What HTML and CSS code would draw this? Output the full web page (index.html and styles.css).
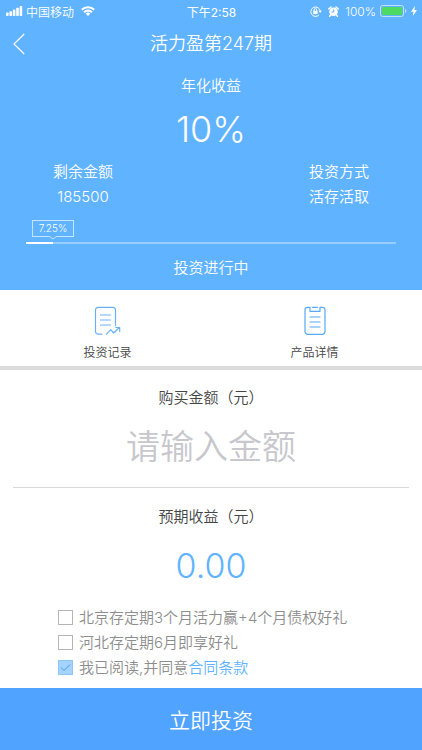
FILE: index.html
```html
<!DOCTYPE html>
<html lang="zh-CN">
<head>
<meta charset="utf-8">
<meta name="viewport" content="width=device-width, initial-scale=1">
<title>活力盈第247期</title>
<link rel="stylesheet" href="styles.css">
</head>
<body>
<main class="app">
  <header class="hero">
    <div class="status">
      <div class="status-side">
        <svg class="signal" width="17" height="10" viewBox="0 0 17 10" fill="#fff" aria-hidden="true"><rect x="0" y="6.5" width="2.6" height="3.5" rx=".8"/><rect x="3.4" y="5.2" width="2.6" height="4.8" rx=".8"/><rect x="6.8" y="3.6" width="2.6" height="6.4" rx=".8"/><rect x="10.2" y="1.8" width="2.6" height="8.2" rx=".8"/><rect x="13.6" y="0" width="2.6" height="10" rx=".8"/></svg>
        <span>中国移动</span>
        <svg class="wifi" width="14" height="10" viewBox="0 0 14 10" fill="none" stroke="#fff" stroke-width="2.2" aria-hidden="true"><path d="M.8 3.800a8.800 8.800 0 0 1 12.400 0"/><path d="M3.100 6.300a5.500 5.500 0 0 1 7.800 0"/><path d="M7 10 4.700 7.800a3.200 3.200 0 0 1 4.600 0z" fill="#fff" stroke="none"/></svg>
      </div>
      <span class="time">下午2:58</span>
      <div class="status-side status-right">
        <svg width="12" height="11" viewBox="0 0 12 11" fill="none" stroke="#fff" aria-hidden="true"><path d="M9 8.9A4.7 4.7 0 1 1 10.2 5"/><path d="M8.3 4.8h3.6l-1.8 2.3z" fill="#fff" stroke="none"/><rect x="3.2" y="4.8" width="4.4" height="3.3" fill="#fff" stroke="none"/><path d="M4.1 5V3.9a1.3 1.3 0 0 1 2.6 0V5"/></svg>
        <svg class="alarm" width="11" height="11" viewBox="0 0 11 11" aria-hidden="true"><circle cx="5.5" cy="5.8" r="4.3" fill="#fff"/><path d="M.9 2.9 3 1M10.1 2.9 8 1M2.5 9.2l-.9 1.1M8.5 9.2l.9 1.1" stroke="#fff" stroke-width="1.5" stroke-linecap="round"/><path d="M5.7 3.4V6H3.5" fill="none" stroke="#60b3ff"/></svg>
        <span>100%</span>
        <svg class="battery" width="27" height="12" viewBox="0 0 27 12" aria-hidden="true"><rect x=".5" y=".5" width="23" height="11" rx="2.2" fill="none" stroke="#fff" stroke-opacity=".6"/><rect x="2" y="2" width="20" height="8" rx="1" fill="#4cd964"/><path d="M25 4c1.7.5 1.7 3.5 0 4z" fill="#fff" fill-opacity=".6"/></svg>
        <svg width="6" height="10" viewBox="0 0 6 10" fill="#fff" aria-hidden="true"><path d="M4 0 0 5.7h2.5L1.8 10 6 4.1H3.4z"/></svg>
      </div>
    </div>
    <nav class="nav">
      <button class="back" type="button" aria-label="返回"><svg width="12" height="22" viewBox="0 0 12 22" fill="none" stroke="#fff" stroke-width="1.2"><path d="M11.2 1 1 11l10.2 10"/></svg></button>
      <h1>活力盈第247期</h1>
    </nav>
    <p class="rate-label">年化收益</p>
    <p class="rate">10%</p>
    <div class="facts">
      <div><p>剩余金额</p><p>185500</p></div>
      <div><p>投资方式</p><p>活存活取</p></div>
    </div>
    <div class="progress">
      <span class="tag">7.25%<svg class="pointer" width="8" height="4" viewBox="0 0 8 4" aria-hidden="true"><path d="M0 0h8L4 3z" fill="#60b3ff"/><path d="M.5 .5 4 3 7.5 .5" fill="none" stroke="#c6e4ff"/></svg></span>
      <div class="track"><div class="fill" style="width:7.25%"></div></div>
    </div>
    <p class="state">投资进行中</p>
  </header>

  <nav class="tabs">
    <a href="#records">
      <svg width="28" height="30" viewBox="0 0 28 30" fill="none" stroke="#69b1f4" stroke-width="1.2" stroke-linecap="round" stroke-linejoin="round" aria-hidden="true"><path d="M8 28.2H4.2A2.7 2.7 0 0 1 1.5 25.5V4A2.7 2.7 0 0 1 4.2 1.3h14.6A2.7 2.7 0 0 1 21.5 4v15.500M6.500 9h10M6.500 14h10M6.500 19h10"/><path d="m12.500 28.200 4.200-4.500 3 3.300 5.500-5.500M21.700 21.500h4v4"/></svg>
      <span>投资记录</span>
    </a>
    <a href="#details">
      <svg width="22" height="30" viewBox="0 0 22 30" fill="none" stroke="#55a9f6" stroke-width="1.2" stroke-linecap="round" stroke-linejoin="round" aria-hidden="true"><path d="M6 1.300H3.500A2.500 2.500 0 0 0 1 3.800V25.500A2.800 2.800 0 0 0 3.800 28.300h14.400A2.800 2.800 0 0 0 21 25.500V3.800A2.500 2.500 0 0 0 18.500 1.300H16M6 1.300V5.300H16V1.300M8.500 1.300h5M6 11h10M6 16h10M6 21h10"/></svg>
      <span>产品详情</span>
    </a>
  </nav>

  <form class="form">
    <label class="caption" for="amount">购买金额（元）</label>
    <input class="amount" id="amount" type="text" inputmode="decimal" placeholder="请输入金额">
    <p class="caption">预期收益（元）</p>
    <output class="earning" for="amount">0.00</output>
    <div class="options">
      <label><input type="checkbox">北京存定期3个月活力赢+4个月债权好礼</label>
      <label><input type="checkbox">河北存定期6月即享好礼</label>
      <div class="agree"><label><input type="checkbox" checked>我已阅读,并同意</label><a href="#terms">合同条款</a></div>
    </div>
    <button class="submit" type="submit">立即投资</button>
  </form>
</main>
</body>
</html>
```
FILE: styles.css
```css
* { box-sizing: border-box; }
body, p, h1 { margin: 0; }
body {
  font-family: Inter, "Noto Sans CJK SC", sans-serif;
  font-size: 15px;
  font-weight: 350;
  color: #444;
  background: #fff;
}
button, input { font: inherit; color: inherit; }
button { border: 0; padding: 0; background: none; cursor: pointer; }
a { text-decoration: none; color: inherit; }
svg { display: block; flex: none; }

.app { display: flex; flex-direction: column; min-height: 100vh; }

.hero { background: #60b3ff; color: #fff; text-align: center; padding-bottom: 10px; }
.status {
  display: grid;
  grid-template-columns: 1fr auto 1fr;
  align-items: center;
  height: 22px;
  padding: 0 5px 0 6px;
  font-size: 12px;
}
.status-side { display: flex; align-items: center; gap: 3px; }
.status-right { justify-content: flex-end; gap: 4px; }
.wifi { margin-left: 4px; }
.alarm { margin: 0 2px; }
.time { font-weight: 400; }

.nav {
  display: grid;
  grid-template-columns: 40px 1fr 40px;
  align-items: center;
  height: 44px;
}
.nav h1 { font-size: 18px; font-weight: 350; line-height: 24px; }
.back { display: flex; align-items: center; height: 44px; padding-left: 13px; }

.rate-label { margin-top: 8px; line-height: 24px; }
.rate { margin-top: 9px; font-size: 36px; line-height: 44px; }
.facts { display: flex; justify-content: space-between; padding: 0 53px; margin-top: 8px; line-height: 25px; }

.progress { padding: 11px 26px 0; text-align: left; }
.tag {
  position: relative;
  display: block;
  width: 42px;
  margin-left: 6px;
  border: 1px solid #c6e4ff;
  font-size: 10px;
  line-height: 15px;
  text-align: center;
}
.pointer { position: absolute; left: 16px; top: 15px; }
.track { height: 2px; margin-top: 5px; background: #98cdff; }
.fill { height: 2px; background: #fff; }
.state { margin-top: 12px; line-height: 24px; }

.tabs { display: grid; grid-template-columns: 1fr 1fr; padding: 16px 4px 3px; border-bottom: 4px solid #ddd; font-size: 12px; }
.tabs a { display: flex; flex-direction: column; align-items: center; gap: 7px; line-height: 20px; }

.form { display: flex; flex-direction: column; flex: 1; text-align: center; padding-top: 16px; }
.caption { line-height: 24px; }
.amount {
  align-self: stretch;
  min-width: 0;
  height: 78px;
  margin: 0 13px 17px;
  padding: 0 0 4px;
  border: 0;
  border-bottom: 1px solid #d9d9d9;
  border-radius: 0;
  background: none;
  outline: 0;
  font-size: 34px;
  text-align: center;
}
.amount::placeholder { color: #c7c7cd; opacity: 1; }
.earning { margin-top: 15px; font-size: 34px; line-height: 44px; color: #60b3ff; }
.options { display: flex; flex-direction: column; align-items: flex-start; margin: 17px 0 6px 58px; line-height: 25px; color: #8d8d8d; }
.options label { display: flex; align-items: center; }
.options input {
  appearance: none;
  flex: none;
  width: 15px;
  height: 15px;
  margin: 0 6px 0 0;
  border: 1px solid #b5b5b5;
  background: #fff;
}
.options input:checked {
  border-color: #8cc6fb;
  background: #a6d2ff url("data:image/svg+xml,%3Csvg xmlns='http://www.w3.org/2000/svg' viewBox='0 0 13 13'%3E%3Cpath d='M2 6.500 5 9.500 11 3.500' fill='none' stroke='%233c9df5'/%3E%3C/svg%3E") center / 13px 13px no-repeat;
}
.agree { display: flex; }
.agree a { color: #60b3ff; }
.submit { min-height: 62px; margin-top: auto; background: #50a3ff; color: #fff; font-size: 21px; }
```
